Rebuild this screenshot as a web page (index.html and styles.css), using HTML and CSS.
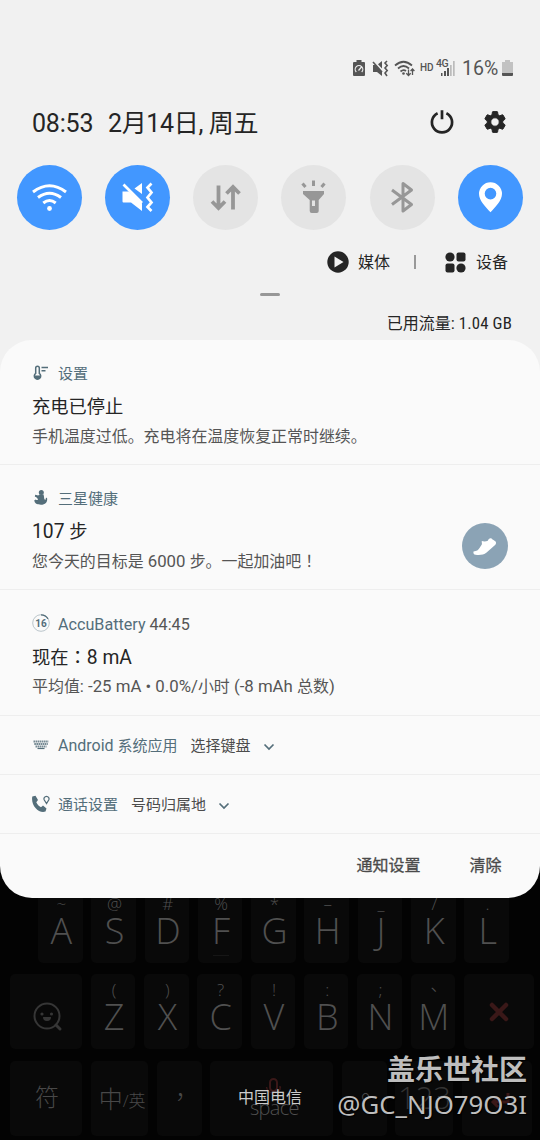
FILE: index.html
```html
<!DOCTYPE html>
<html lang="zh-CN">
<head>
<meta charset="utf-8">
<meta name="viewport" content="width=device-width">
<title>通知</title>
<link rel="stylesheet" href="styles.css">
</head>
<body>
<header class="shade">
  <div class="status">
    <svg class="s-saver" width="12" height="17" viewBox="0 0 12 17"><path fill="#555" d="M3.500 0h5v2H11a1 1 0 0 1 1 1v12a1 1 0 0 1-1 1H1a1 1 0 0 1-1-1V3a1 1 0 0 1 1-1h2.500z"/><path d="M3.300 12A3.800 3.800 0 1 1 8.700 12M5.500 10.500l3-3.500" fill="none" stroke="#eee" stroke-width="1.200"/></svg>
    <svg class="s-mute" width="17" height="17" viewBox="0 0 17 17"><path fill="#555" d="M1 5h2.500l6.500 7V16L5 12H1zM6 4.200L10 1v7.500z"/><path d="M1 2l9 10M15 1l-2 2 2.200 2.500L13 8l2.200 2.500L13 13l2 3" fill="none" stroke="#555" stroke-width="1.600"/></svg>
    <svg class="s-wifi" width="22" height="17" viewBox="0 0 22 17"><g fill="none" stroke="#555" stroke-width="1.700"><path d="M1 5.500Q9.500-2 18 5.500M4 8.500Q9.500 3.500 15 8.500M6.500 11.500Q9.500 9 12 11"/><path stroke-width="1.300" d="M14.500 9.500v6M12.300 13.300l2.200 2.200 2.200-2.200M18.500 15V9M16.600 11l1.900-2 1.900 2"/></g><circle cx="9.500" cy="13.500" r="1.300" fill="#555"/></svg>
    <span class="s-hd">HD</span>
    <span class="s-net"><svg width="18" height="17" viewBox="0 0 18 17"><path fill="#555" d="M4 13h1.500v3H4zM7 11h2v5H7zM10 8h2v8h-2z"/><path fill="#bbb" d="M13 5h1.700v11H13zM16 1h1.700v15H16z"/></svg><b class="s-4g">4G</b></span>
    <span class="s-pct">16%</span>
    <svg width="11" height="17" viewBox="0 0 11 17"><path fill="#c2c2c2" d="M3 0h5v2h3v11H0V2h3z"/><path fill="#555" d="M0 13h11v2a1 1 0 0 1-1 1H1a1 1 0 0 1-1-1z"/></svg>
  </div>
  <div class="clock">
    <span class="time">08:53</span><span class="date">2月14日, 周五</span>
    <svg class="power" width="26" height="26" viewBox="0 0 26 26"><path d="M8.600 4.200A10.100 10.100 0 1 0 17.400 4.200M13 1.300v9" fill="none" stroke="#252525" stroke-width="2.700"/></svg>
    <svg class="gear" width="26" height="26" viewBox="0 0 24 24"><path fill="#252525" stroke="#252525" stroke-width=".9" stroke-linejoin="round" d="M19.140 12.940c.04-.3.060-.61.060-.94 0-.32-.02-.64-.07-.94l2.030-1.580a.49.49 0 0 0 .12-.61l-1.920-3.320a.49.49 0 0 0-.59-.22l-2.390.96a7 7 0 0 0-1.620-.94l-.36-2.540a.48.48 0 0 0-.48-.41h-3.840a.47.47 0 0 0-.47.410l-.36 2.540c-.59.24-1.130.57-1.620.94l-2.390-.96a.48.48 0 0 0-.59.220L2.740 8.870a.48.48 0 0 0 .12.610l2.030 1.580a6 6 0 0 0 0 1.880l-2.030 1.580a.49.49 0 0 0-.12.610l1.920 3.320c.12.220.37.290.59.220l2.390-.96c.5.380 1.030.7 1.620.94l.36 2.540c.05.240.24.410.48.410h3.840c.24 0 .44-.17.470-.41l.36-2.540a7 7 0 0 0 1.620-.94l2.390.96c.22.080.47 0 .59-.22l1.920-3.320a.47.47 0 0 0-.12-.61zM12 15.900a3.900 3.900 0 1 1 0-7.800 3.900 3.900 0 0 1 0 7.800z"/></svg>
  </div>
  <div class="toggles">
    <div class="tg on"><svg width="65" height="65" viewBox="0 0 65 65"><g fill="none" stroke="#fff" stroke-width="3"><path d="M16 27Q32.500 14.500 49 27M21 32.500Q32.500 24 44 32.500M26.300 38Q32.500 33 38.700 38"/></g><circle cx="32.500" cy="43.500" r="2.400" fill="#fff"/></svg></div>
    <div class="tg on"><svg width="65" height="65" viewBox="0 0 65 65"><path fill="#fff" d="M17.500 26.500H24L37 38.500V46L26 37.500h-7.500a1 1 0 0 1-1-1zM29.500 23.500L37 18v11z"/><path d="M18.500 19.500L37 38M46.500 18.500L42.500 22.500 46.500 27.500 42.500 32.500 46.500 37.500 42.500 42 46.500 46" fill="none" stroke="#fff" stroke-width="2.700"/></svg></div>
    <div class="tg"><svg width="65" height="65" viewBox="0 0 65 65"><path d="M25.500 20.500v22M19 36.500l6.500 6.500 6.500-6.500M40 44.500v-22M33.500 28.500L40 22l6.500 6.500" fill="none" stroke="#979797" stroke-width="3.800"/></svg></div>
    <div class="tg"><svg width="65" height="65" viewBox="0 0 65 65"><path fill="#979797" fill-rule="evenodd" d="M22 26h21v3l-5.300 6v11a2 2 0 0 1-2 2h-5a2 2 0 0 1-2-2V35L22 29zM31 35.500V41h3v-5.500z"/><path d="M32.500 15.500V21M21.500 18.500l3 3.500M43.500 18.500l-3 3.500" stroke="#979797" stroke-width="3"/></svg></div>
    <div class="tg"><svg width="65" height="65" viewBox="0 0 65 65"><path d="M22 25l19.500 14.500-8.500 6.500V18.500l8.500 6.500L22 39.500" fill="none" stroke="#979797" stroke-width="3" stroke-linejoin="round"/></svg></div>
    <div class="tg on"><svg width="65" height="65" viewBox="0 0 65 65"><path fill="#fff" fill-rule="evenodd" d="M32.500 17.300A11.500 11.500 0 0 1 44 28.800C44 35.500 37.500 42 32.500 47.300 27.500 42 21 35.500 21 28.800A11.500 11.500 0 0 1 32.500 17.300zm0 5.500a5.800 5.800 0 1 0 0 11.600 5.800 5.800 0 0 0 0-11.600z"/></svg></div>
  </div>
  <div class="media">
    <svg width="22" height="22" viewBox="0 0 22 22"><circle cx="11" cy="11" r="10.700" fill="#252525"/><path fill="#f1f1f1" d="M7.500 5.500l9 5.500-9 5.500z"/></svg>
    <span class="m-label">媒体</span><i class="m-sep"></i>
    <svg width="21" height="21" viewBox="0 0 21 21" fill="#252525"><circle cx="5" cy="5" r="4.600"/><rect x="11.500" y=".5" width="9" height="9" rx="2"/><rect x=".5" y="11.500" width="9" height="9" rx="2"/><circle cx="16" cy="16" r="4.600"/></svg>
    <span class="m-label2">设备</span>
  </div>
  <div class="handle"></div>
  <div class="usage">已用流量<span class="usage-num">: 1.04 GB</span></div>
</header>

<div class="card-wrap"><main class="card">
  <section class="note">
    <div class="app"><svg width="18" height="18" viewBox="0 0 18 18"><path d="M3.700 9.300V4a1.800 1.800 0 0 1 3.600 0v5.300a3.200 3.200 0 1 1-3.600 0z" fill="none" stroke="#546e7a" stroke-width="1.500"/><path fill="#546e7a" d="M2.300 11.500h6.500a3.200 3.200 0 0 1-6.500 1z"/><path d="M9.500 3.500H16M9.500 6.800h4" stroke="#546e7a" stroke-width="1.400"/></svg><span>设置</span></div>
    <h2>充电已停止</h2><p>手机温度过低。充电将在温度恢复正常时继续。</p>
  </section>
  <section class="note health">
    <div class="app"><svg width="18" height="18" viewBox="0 0 18 18"><circle cx="9.300" cy="3.500" r="2.500" fill="#546e7a"/><path fill="#546e7a" d="M7.500 5.500h4c.8 2 .3 3.500 1 5h1.500l-.3-1.500 1.300-.3c1 4.500-2 7-6 7S2.500 14.500 2.300 11.300l1.500-.8c.7.700 1.700.7 2.200 0L5 8.800 2.800 7.500l.4-1.700 3 .7z"/></svg><span>三星健康</span></div>
    <h2><span class="l">107 </span>步</h2><p>您今天的目标是<span class="l"> 6000 </span>步。一起加油吧<span class="tc" lang="zh-TW">！</span></p>
    <div class="shoe"><svg width="46" height="46" viewBox="0 0 46 46"><path fill="#fff" d="M11.500 28.500c3-.3 5-1.500 6-3.500l2.300-3.500c.5-1-.3-2 0-3.500 2 .8 4.500.5 6-.3 1.300-2.500 2.600-3 4-2 .8 1.200 2.500 1.500 3.800 2.700.8 1.300.5 2.500-.5 3.500l-8.500 7.600c-3 2.500-7 2.800-11 2.300-1.800-.3-2.500-1.500-2.100-3.300z"/></svg></div>
  </section>
  <section class="note battery">
    <div class="app"><svg width="18" height="18" viewBox="0 0 18 18"><circle cx="9" cy="9" r="8.300" fill="none" stroke="#aab8be" stroke-width=".8"/><path d="M9 .8a8.200 8.200 0 0 1 7 4" fill="none" stroke="#546e7a" stroke-width="1.300"/><text class="badge16" x="9" y="12.700" text-anchor="middle">16</text></svg><span class="latin">AccuBattery <em>44:45</em></span></div>
    <h2>现在<span class="tc" lang="zh-TW">：</span><span class="l">8 mA</span></h2><p>平均值<span class="l">: -25 mA • 0.0%/</span>小时<span class="l"> (-8 mAh </span>总数<span class="l">)</span></p>
  </section>
  <section class="mini"><svg width="18" height="18" viewBox="0 0 18 18"><path d="M1.500 5.500h15M2.300 8h13.500M3.500 10.500h11" stroke="#546e7a" stroke-width="1.900" stroke-dasharray="1.600 .5" opacity=".8"/><path d="M5.500 12.500h7" stroke="#546e7a" stroke-width="1.200"/></svg><span class="m-app"><span class="l">Android </span>系统应用</span><span class="m-text">选择键盘</span><svg class="chev" width="12" height="8" viewBox="0 0 12 8"><path d="M1.500 1.500L6 6l4.500-4.500" fill="none" stroke="#546e7a" stroke-width="1.700"/></svg></section>
  <section class="mini second"><svg width="18" height="18" viewBox="0 0 18 18"><path fill="#546e7a" d="M.3 1.500L3.500.8 6 5 4.300 7.200c1 2.300 2.500 3.800 4.700 5l2-1.700 3.500 3-1 3C7 19-1.500 10.500.3 1.500z"/><path d="M14.500 8.500L12.300 5a2.500 2.500 0 1 1 4.400 0z" fill="none" stroke="#546e7a" stroke-width="1.300"/></svg><span class="m-app">通话设置</span><span class="m-text">号码归属地</span><svg class="chev" width="12" height="8" viewBox="0 0 12 8"><path d="M1.500 1.500L6 6l4.500-4.500" fill="none" stroke="#546e7a" stroke-width="1.700"/></svg></section>
  <footer class="actions"><span>通知设置</span><span>清除</span></footer>
</main></div>

<div class="keyboard">
  <div class="row r1">
    <div class="key"><small>~</small><b>A</b></div><div class="key"><small>@</small><b>S</b></div><div class="key"><small>#</small><b>D</b></div><div class="key home"><small>%</small><b>F</b></div><div class="key"><small>*</small><b>G</b></div><div class="key"><small>–</small><b>H</b></div><div class="key"><small>_</small><b>J</b></div><div class="key"><small>/</small><b>K</b></div><div class="key"><small>.</small><b>L</b></div>
  </div>
  <div class="row r2">
    <div class="key icon"><svg width="32" height="32" viewBox="0 0 32 32"><g fill="none" stroke="#363636"><circle cx="15" cy="15" r="12.500" stroke-width="2"/><path d="M24 24l4 4" stroke-width="3" stroke-linecap="round"/></g><g fill="#363636"><circle cx="10" cy="13" r="1.600"/><circle cx="19.500" cy="13" r="1.600"/><path d="M11 16h8a4 4 0 0 1-8 0z"/></g></svg></div>
    <div class="key"><small>(</small><b>Z</b></div><div class="key"><small>)</small><b>X</b></div><div class="key"><small>?</small><b>C</b></div><div class="key"><small>!</small><b>V</b></div><div class="key"><small>:</small><b>B</b></div><div class="key"><small>;</small><b>N</b></div><div class="key"><small lang="zh-TW">、</small><b>M</b></div>
    <div class="key icon"><svg width="22" height="22" viewBox="0 0 22 22"><path d="M4 4l14 14M18 4L4 18" stroke="#3a1818" stroke-width="4.500" stroke-linecap="round"/></svg></div>
  </div>
  <div class="row r3">
    <div class="key word">符</div><div class="key word zh">中<span>/英</span></div><div class="key word comma" lang="zh-TW">，</div>
    <div class="key space"><svg width="22" height="20" viewBox="0 0 22 20"><rect x="7" y="1" width="7" height="12" rx="3.500" fill="none" stroke="#3a1818" stroke-width="2"/><path d="M17 8v4M3.500 9c1 8 13 8 14 0" fill="none" stroke="#361616" stroke-width="1.500"/></svg><span>space</span></div>
    <div class="key word stop" lang="zh-TW">。</div><div class="key num">123</div>
    <div class="key icon enter"><svg width="22" height="18" viewBox="0 0 22 18"><path d="M19 2v9H5M9 6l-5 5 5 5" fill="none" stroke="#3a1818" stroke-width="3"/></svg></div>
  </div>
  <div class="carrier">中国电信</div>
  <div class="mark"><strong>盖乐世社区</strong><span>@GC_NJO79O3I</span></div>
</div>
</body>
</html>
```
FILE: styles.css
```css
* { box-sizing: border-box; }
body { margin: 0; width: 540px; height: 1140px; overflow: hidden; background: #030303; font-family: Roboto, "Noto Sans CJK SC", sans-serif; color: #252525; }
svg { display: block; flex: none; }
h2, p { margin: 0; font-weight: 400; white-space: nowrap; }
.tc { font-family: "Noto Sans CJK TC", sans-serif; line-height: 1; }
.shade { height: 340px; background: #f1f1f1; padding-top: 54px; }
.status { display: flex; align-items: center; height: 28px; padding-left: 353px; color: #555; }
.s-mute { margin-left: 7px; }
.s-wifi { margin-left: 5px; }
.s-hd { margin-left: 4px; font-size: 10px; font-weight: 500; width: 15px; line-height: 14px; }
.s-net { position: relative; margin-left: 2px; }
.s-4g { position: absolute; left: -1px; top: -2px; font-size: 10.500px; line-height: 11px; letter-spacing: -.5px; font-weight: 500; }
.s-pct { margin-left: 7px; width: 40px; font-size: 19.500px; line-height: 28px; padding-top: 2px; }
.clock { display: flex; align-items: center; height: 81px; padding-left: 32px; font-size: 25px; line-height: 36px; white-space: nowrap; }
.time { width: 76px; padding-top: 2px; letter-spacing: -.2px; }
.date { width: 322px; padding-top: 2px; letter-spacing: -.35px; }
.power { margin: -2px 0 0 -1px; }
.gear { margin: -2px 0 0 27.400px; }
.toggles { display: flex; gap: 23.150px; padding-left: 17px; margin-top: 2px; }
.tg { width: 65px; height: 65px; flex: none; border-radius: 50%; background: #e4e4e4; }
.tg.on { background: #4297ff; }
.media { display: flex; align-items: center; height: 24px; margin-top: 20px; padding-left: 327px; font-size: 16px; line-height: 24px; }
.m-label { margin: 2px 0 0 9px; width: 56px; }
.m-sep { width: 1.500px; height: 14px; background: #999; margin-right: 29.500px; }
.m-label2 { margin: 2px 0 0 10px; }
.handle { width: 20px; height: 3px; border-radius: 1.500px; background: #979797; margin: 19px 0 0 260px; }
.usage { padding-right: 28px; margin-top: 15px; text-align: right; font-size: 16px; line-height: 24px; }
.usage-num { font-family: "Roboto Condensed", Roboto, sans-serif; font-size: 16.800px; letter-spacing: .15px; }
.card-wrap { height: 557.500px; background: linear-gradient(#f1f1f1 50%, #030303 50%); }
.card { height: 557.500px; background: #fafafa; border-radius: 32px; overflow: hidden; }
.note { position: relative; height: 125.500px; border-bottom: 1.500px solid #eee; padding: 24px 0 0 32px; }
.note:first-child { height: 124.500px; }
.app { display: flex; align-items: center; gap: 8px; height: 20px; color: #546e7a; font-size: 15px; line-height: 20px; }
.app svg { margin-top: -2px; }
.latin { font-size: 16.150px; white-space: pre; padding-top: 1px; }
.latin em { font-style: normal; color: #555; }
.badge16 { font: 700 10px Roboto, sans-serif; fill: #546e7a; }
.note h2 { font-size: 18.300px; line-height: 26px; height: 26px; margin-top: 10px; }
.note h2 .l { font-size: 19.300px; white-space: pre; }
.note p { color: #555; font-size: 15.950px; line-height: 24px; height: 24px; margin-top: 5px; }
.note p .l { font-size: 16.800px; white-space: pre; }
.health p { margin-top: 4px; }
.battery h2 { margin-top: 11px; }
.battery p { margin-top: 3px; }
.shoe { position: absolute; right: 31.900px; top: 58.500px; width: 46px; height: 46px; border-radius: 50%; background: #8ba3b5; }
.mini { display: flex; align-items: center; height: 59.500px; border-bottom: 1.500px solid #eee; padding-left: 32px; font-size: 15px; line-height: 24px; }
.mini.second { height: 58.500px; }
.mini .l { font-size: 16px; white-space: pre; }
.m-app { color: #546e7a; margin-left: 8px; padding-top: 2px; white-space: nowrap; }
.m-text { color: #4c4c4c; margin-left: 13px; padding-top: 2px; }
.chev { margin: 4px 0 0 12px; }
.actions { display: flex; gap: 49px; justify-content: flex-end; padding: 20px 38.500px 0 0; color: #4a4a4a; font-size: 16px; line-height: 24px; -webkit-text-stroke: .3px #4a4a4a; }
.keyboard { position: relative; height: 242.500px; overflow: hidden; font-family: "Open Sans", "Noto Sans CJK TC", sans-serif; color: #505050; font-weight: 300; }
.row { display: flex; gap: 8.800px; height: 75px; margin-bottom: 11.500px; padding-left: 10px; }
.r1 { margin-top: -10px; padding-left: 38px; }
.key { display: flex; flex-direction: column; align-items: center; width: 44.500px; height: 75px; flex: none; background: #090909; border-radius: 5px; padding: 5px 0 0 2px; }
.key small { font-size: 17px; line-height: 22px; height: 22px; }
.key b { font-weight: 300; font-size: 36px; line-height: 38px; height: 38px; margin-top: -3px; }
.home::after { content: ""; width: 16px; height: 1px; background: #161616; margin-top: 5px; }
.r2 .key:first-child, .r3 .key:first-child { width: 72px; }
.r2 .key:last-child, .r3 .key:last-child { width: 70px; }
.icon { padding: 27px 0 0 4px; }
.r2 .icon:last-child { padding: 27px 0 0; }
.enter.icon { padding: 30px 0 0 6px; }
.key.word { flex-direction: row; justify-content: center; font-size: 24px; line-height: 36px; padding-top: 18px; align-items: flex-start; color: #484848; }
.key.zh { width: 57.500px; padding: 20px 0 0 5px; }
.zh span { font-size: 17px; padding-top: 2px; }
.key.space { width: 123px; padding: 17px 0 0 5px; }
.space span { font-size: 20px; line-height: 22px; margin-top: -1px; letter-spacing: -.7px; }
.key.num { width: 58px; padding: 17px 0 0; font-size: 31px; line-height: 38px; color: #333; }
.carrier { position: absolute; left: 238px; top: 186px; font-size: 16px; line-height: 24px; color: #ccc; font-weight: 400; font-family: "Noto Sans CJK SC", sans-serif; }
.mark { position: absolute; right: 13px; top: 151px; text-align: right; color: #bebebe; white-space: nowrap; text-shadow: 1px 1px 1px #000; }
.mark strong { display: block; font-size: 28px; line-height: 38px; font-weight: 700; font-family: "Noto Sans CJK SC", sans-serif; }
.mark span { display: block; font-size: 25.800px; line-height: 34px; font-weight: 400; font-family: "Noto Sans", sans-serif; }
```
